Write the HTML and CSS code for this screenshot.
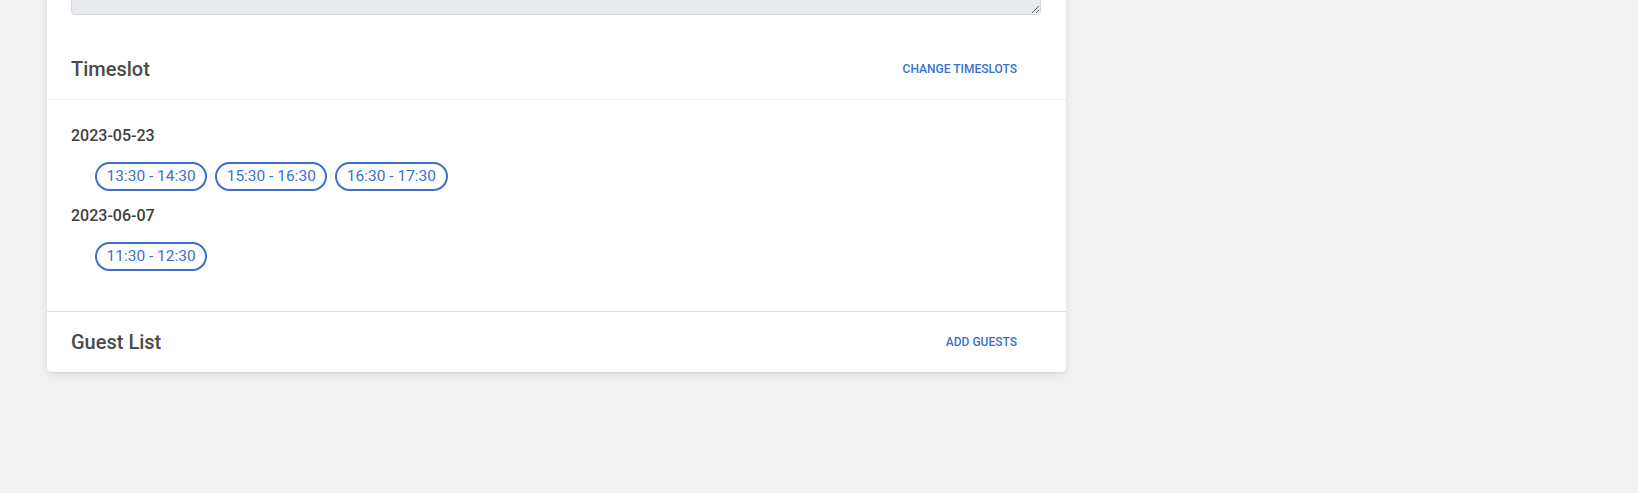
FILE: index.html
```html
<!DOCTYPE html>
<html lang="en">
<head>
<meta charset="utf-8">
<title>Booking</title>
<link rel="stylesheet" href="styles.css">
</head>
<body>
<div class="page">
  <div class="card">
    <div class="notes">
      <textarea class="notes-input" disabled></textarea>
    </div>
    <div class="section-header">
      <h2 class="section-title">Timeslot</h2>
      <button class="text-btn">Change timeslots</button>
    </div>
    <div class="timeslots">
      <div class="date-group">
        <div class="date-label">2023-05-23</div>
        <div class="chips">
          <span class="chip">13:30 - 14:30</span>
          <span class="chip">15:30 - 16:30</span>
          <span class="chip">16:30 - 17:30</span>
        </div>
      </div>
      <div class="date-group">
        <div class="date-label">2023-06-07</div>
        <div class="chips">
          <span class="chip">11:30 - 12:30</span>
        </div>
      </div>
    </div>
    <div class="section-header guest-header">
      <h2 class="section-title">Guest List</h2>
      <button class="text-btn">Add guests</button>
    </div>
  </div>
</div>
</body>
</html>
```
FILE: styles.css
```css
* { box-sizing: border-box; }
html, body { height: 100%; }
body {
  margin: 0;
  background: #f2f2f2;
  font-family: Roboto, "Liberation Sans", Arial, sans-serif;
  color: #444;
  overflow: hidden;
}
.page {
  padding-left: 47px;
}
.card {
  width: 1019px;
  margin-top: -100px;
  background: #fff;
  border-radius: 4px;
  box-shadow: 0 3px 10px rgba(0, 0, 0, 0.09), 0 1px 2px rgba(0, 0, 0, 0.05);
}
.notes {
  padding: 0 25px 24px 24px;
}
.notes-input {
  display: block;
  width: 100%;
  height: 115px;
  margin: 0;
  background: #e8ebee;
  border: 1px solid #d3d7db;
  border-radius: 4px;
  resize: vertical;
  font: inherit;
}
.section-header {
  height: 61px;
  display: flex;
  align-items: center;
  justify-content: space-between;
  padding: 0 49px 0 24px;
  border-bottom: 1px solid #efefef;
}
.guest-header {
  border-bottom: 0;
  border-top: 1px solid #dedede;
  height: 61px;
}
.section-title {
  margin: 0;
  font-size: 20px;
  font-weight: 500;
  color: #4a4a4a;
  letter-spacing: 0;
}
.text-btn {
  border: 0;
  background: none;
  padding: 0;
  font-family: inherit;
  font-size: 12px;
  font-weight: 500;
  text-transform: uppercase;
  color: #3a70d0;
  letter-spacing: 0;
  cursor: pointer;
}
.timeslots {
  padding: 24px 24px 40px;
}
.date-group + .date-group {
  margin-top: 13px;
}
.date-label {
  font-size: 16px;
  line-height: 24px;
  font-weight: 500;
  color: #404040;
}
.chips {
  display: flex;
  gap: 8px;
  margin-top: 14px;
  padding-left: 24px;
}
.chip {
  display: inline-block;
  height: 29px;
  padding: 0 9.5px;
  border: 2px solid #3a70d0;
  border-radius: 15px;
  font-size: 15.5px;
  line-height: 25px;
  color: #3a70d0;
  white-space: nowrap;
}
```
